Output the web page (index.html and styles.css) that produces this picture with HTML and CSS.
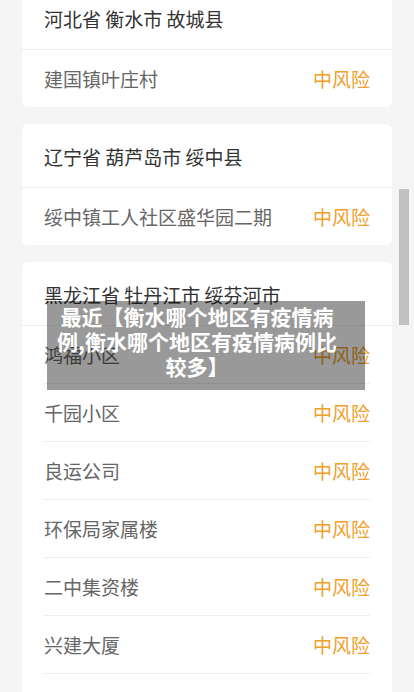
FILE: index.html
```html
<!DOCTYPE html>
<html>
<head>
  <meta charset="UTF-8">
  <title>衡水疫情风险地区</title>
  <link rel="stylesheet" href="styles.css">
</head>
<body>
  <main class="list">
    <section class="card">
      <div class="area">河北省 衡水市 故城县</div>
      <div class="row"><span>建国镇叶庄村</span><span class="risk">中风险</span></div>
    </section>
    <section class="card">
      <div class="area">辽宁省 葫芦岛市 绥中县</div>
      <div class="row"><span>绥中镇工人社区盛华园二期</span><span class="risk">中风险</span></div>
    </section>
    <section class="card">
      <div class="area">黑龙江省 牡丹江市 绥芬河市</div>
      <div class="row"><span>鸿福小区</span><span class="risk">中风险</span></div>
      <div class="row"><span>千园小区</span><span class="risk">中风险</span></div>
      <div class="row"><span>良运公司</span><span class="risk">中风险</span></div>
      <div class="row"><span>环保局家属楼</span><span class="risk">中风险</span></div>
      <div class="row"><span>二中集资楼</span><span class="risk">中风险</span></div>
      <div class="row"><span>兴建大厦</span><span class="risk">中风险</span></div>
    </section>
  </main>

  <div class="title-box">最近【衡水哪个地区有疫情病例,衡水哪个地区有疫情病例比较多】</div>
  <div class="scroll-thumb"></div>
</body>
</html>
```

FILE: styles.css
```css
body {
  margin: 0;
  padding: 0;
  background: #f5f5f5;
  font-family: "Noto Sans CJK SC", "Noto Sans", sans-serif;
  height: 692px;
  overflow: hidden;
}
.list {
  margin-top: -14px;
  padding: 0 22px;
}
.card {
  background: #fff;
  border-radius: 6px;
  margin-bottom: 17px;
}
.card:last-child {
  padding-bottom: 40px;
}
.area {
  height: 63px;
  line-height: 65px;
  padding: 0 22px;
  font-size: 19px;
  color: #333;
  border-bottom: 1px solid #eee;
  white-space: nowrap;
}
.row {
  display: flex;
  justify-content: space-between;
  align-items: center;
  height: 57px;
  line-height: 55px;
  margin: 0 22px;
  font-size: 19px;
  color: #666;
  border-bottom: 1px solid #eee;
}
.card:not(:last-child) .row:last-child {
  border-bottom: none;
}
.risk {
  color: #f0a02c;
}
.title-box {
  position: absolute;
  left: 47px;
  top: 301px;
  width: 284px;
  padding: 3px 26px 11px 8px;
  background: rgba(0,0,0,0.4);
  color: #fff;
  font-size: 21px;
  font-weight: bold;
  line-height: 25px;
  text-align: center;
}
.scroll-thumb {
  position: fixed;
  left: 399px;
  top: 189px;
  width: 10px;
  height: 136px;
  background: #c1c1c1;
}
```
